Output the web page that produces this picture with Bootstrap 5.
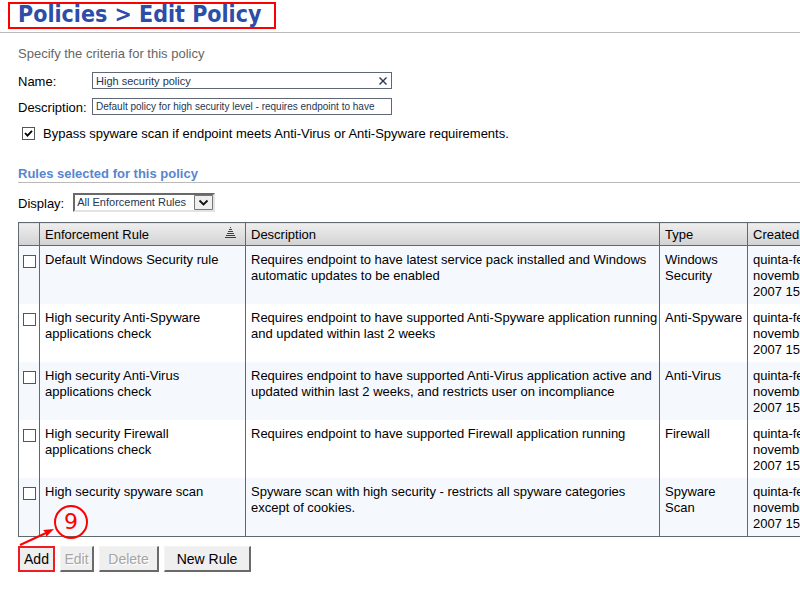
<!DOCTYPE html>
<html lang="en">
<head>
<meta charset="utf-8">
<meta name="viewport" content="width=device-width, initial-scale=1">
<title>Edit Policy</title>
<link href="https://cdn.jsdelivr.net/npm/bootstrap@5.3.0/dist/css/bootstrap.min.css" rel="stylesheet">
<style>
  body { font-family: "Liberation Sans", Arial, sans-serif; font-size: 13px; line-height: 16px; color: #000; background: #fff; overflow-x: hidden; }
  .title-bar { height: 33px; border-bottom: 1px solid #b9b9b9; padding-left: 8px; }
  .page-title { font-family: "DejaVu Sans Condensed", "Noto Sans", sans-serif; font-size: 23px; line-height: 20px; font-weight: 700; color: #2c4da8; border: 2px solid #f00; margin: 2px 0 0; padding: 0 13px 0 8px; height: 27px; }
  .page-body { padding-left: 18px; overflow: hidden; }
  .hint { color: #666; margin: 13px 0 10px; }
  .form-line { height: 18px; margin-bottom: 8px; }
  .form-line label { width: 74px; padding-top: 2px; }
  .field { width: 300px; height: 17px; border: 1px solid #606878; }
  .field input { flex: 1; min-width: 0; border: 0; outline: 0; padding: 1px 0 0 3px; font-size: 11px; line-height: 14px; color: #263650; background: none; }
  .field .long-value { font-size: 10px; }
  .clear-btn { border: 0; background: none; padding: 0; width: 16px; }
  .tick { appearance: none; flex: none; width: 13px; height: 13px; margin: 0; border: 1px solid #555; background: #fff; display: block; }
  .tick:checked { background: #fff url("data:image/svg+xml,%3Csvg xmlns='http://www.w3.org/2000/svg' viewBox='0 0 11 11'%3E%3Cpath d='M2 5 4.5 7.7 9 2.8' fill='none' stroke='%23000' stroke-width='1.8'/%3E%3C/svg%3E"); }
  .bypass { margin: 9px 0 0 4px; gap: 8px; }
  .bypass label { padding-top: 1px; }
  .section-title { font-size: 13px; line-height: 16px; font-weight: 700; color: #5686d0; margin: 24px 0 0; border-bottom: 1px solid #b9b9b9; }
  .display-line { margin: 10px 0; gap: 9px; height: 19px; }
  .display-line label { padding-top: 2px; }
  .picker { width: 142px; height: 19px; border: 2px solid; border-color: #696969 #e3e3e3 #e3e3e3 #696969; }
  .picker select { appearance: none; width: 100%; height: 15px; border: 0; border-radius: 0; outline: 0; background: #fff; color: #263650; font-size: 11px; line-height: 15px; padding: 0 20px 0 2px; }
  .picker svg { right: 0; top: 0; pointer-events: none; }
  .rules { table-layout: fixed; width: 870px; border-collapse: collapse; border: 1px solid #606870; }
  .rules th { font-weight: 400; height: 23px; padding: 1px 5px 0; border: 1px solid #606870; background: linear-gradient(#eee, #d2d2d2); }
  .rules td { height: 58px; padding: 6px 0 4px 5px; vertical-align: top; border: solid #606870; border-width: 0 1px; }
  .rules tbody tr:nth-child(odd) { background: #f5f9fe; }
  .rules td:first-child { padding: 9px 0 0 4px; }
  .c-tick { width: 21px; } .c-name { width: 206px; } .c-desc { width: 414px; } .c-type { width: 88px; }
  .actions { margin-top: 9px; gap: 5px; height: 26px; }
  .push { height: 26px; font-size: 14px; line-height: 16px; padding: 0; color: #000; background: #efefef; border: solid; border-width: 1px 2px 2px 1px; border-color: #f4f4f4 #6a6a6a #6a6a6a #f4f4f4; }
  .push:disabled { color: #a5a5a5; text-shadow: 1px 1px #fff; }
  .push-add { width: 37px; border: 2px solid #ee1c24; }
  .w-edit { width: 34px; } .w-delete { width: 60px; } .w-new { width: 87px; }
  .callout { left: 0; bottom: 23px; pointer-events: none; }
</style>
<script src="https://cdn.jsdelivr.net/npm/bootstrap@5.3.0/dist/js/bootstrap.bundle.min.js"></script>
</head>
<body>
<header class="title-bar d-flex align-items-start">
  <h1 class="page-title text-nowrap">Policies &gt; Edit Policy</h1>
</header>
<main class="page-body">
  <p class="hint">Specify the criteria for this policy</p>
  <form>
    <div class="form-line d-flex">
      <label for="name">Name:</label>
      <div class="field d-flex">
        <input id="name" type="text" value="High security policy">
        <button class="clear-btn d-flex align-items-center justify-content-center" type="button" aria-label="Clear"><svg width="8" height="8" viewBox="0 0 8 8"><path d="M.5.5l7 7M7.5.5l-7 7" stroke="#263650" stroke-width="1.4"/></svg></button>
      </div>
    </div>
    <div class="form-line d-flex">
      <label for="desc">Description:</label>
      <div class="field d-flex"><input class="long-value" id="desc" type="text" value="Default policy for high security level - requires endpoint to have"></div>
    </div>
    <div class="bypass d-flex align-items-center">
      <input class="tick" id="bypass" type="checkbox" checked>
      <label for="bypass">Bypass spyware scan if endpoint meets Anti-Virus or Anti-Spyware requirements.</label>
    </div>
    <h2 class="section-title">Rules selected for this policy</h2>
    <div class="display-line d-flex align-items-center">
      <label for="display">Display:</label>
      <div class="picker position-relative d-flex">
        <select id="display"><option>All Enforcement Rules</option></select>
        <svg class="position-absolute" width="19" height="15" viewBox="0 0 19 15"><path d="M.5.5h18v14H.5z" fill="#efefef" stroke="#777"/><path d="M5.5 5.5l4 4 4-4" fill="none" stroke="#111" stroke-width="1.8"/></svg>
      </div>
    </div>
    <table class="rules">
      <colgroup><col class="c-tick"><col class="c-name"><col class="c-desc"><col class="c-type"><col></colgroup>
      <thead>
        <tr>
          <th aria-label="Select"></th>
          <th><div class="d-flex justify-content-between align-items-start">Enforcement Rule
            <svg class="me-1" width="11" height="11" viewBox="0 0 11 11" stroke="#24465c"><path d="M5 .5h1M4 2.5h3M3 4.5h5M2 6.5h7M1 8.5h9M0 10.5h11"/></svg></div></th>
          <th>Description</th><th>Type</th><th>Created</th>
        </tr>
      </thead>
      <tbody>
        <tr><td><input class="tick" type="checkbox" aria-label="Default Windows Security rule"></td><td>Default Windows Security rule</td><td>Requires endpoint to have latest service pack installed and Windows automatic updates to be enabled</td><td>Windows Security</td><td>quinta-feira<br>novembro<br>2007 15:00</td></tr>
        <tr><td><input class="tick" type="checkbox" aria-label="High security Anti-Spyware applications check"></td><td>High security Anti-Spyware<br>applications check</td><td>Requires endpoint to have supported Anti-Spyware application running and updated within last 2 weeks</td><td>Anti-Spyware</td><td>quinta-feira<br>novembro<br>2007 15:00</td></tr>
        <tr><td><input class="tick" type="checkbox" aria-label="High security Anti-Virus applications check"></td><td>High security Anti-Virus<br>applications check</td><td>Requires endpoint to have supported Anti-Virus application active and updated within last 2 weeks, and restricts user on incompliance</td><td>Anti-Virus</td><td>quinta-feira<br>novembro<br>2007 15:00</td></tr>
        <tr><td><input class="tick" type="checkbox" aria-label="High security Firewall applications check"></td><td>High security Firewall<br>applications check</td><td>Requires endpoint to have supported Firewall application running</td><td>Firewall</td><td>quinta-feira<br>novembro<br>2007 15:00</td></tr>
        <tr><td><input class="tick" type="checkbox" aria-label="High security spyware scan"></td><td>High security spyware scan</td><td>Spyware scan with high security - restricts all spyware categories<br>except of cookies.</td><td>Spyware<br>Scan</td><td>quinta-feira<br>novembro<br>2007 15:00</td></tr>
      </tbody>
    </table>
    <div class="actions d-flex position-relative">
      <button class="push push-add" type="button">Add</button>
      <button class="push w-edit" type="button" disabled>Edit</button>
      <button class="push w-delete" type="button" disabled>Delete</button>
      <button class="push w-new" type="button">New Rule</button>
      <svg class="callout position-absolute" width="72" height="46" viewBox="0 0 72 46" fill="none" stroke="#f00"><circle cx="53" cy="19" r="16" stroke-width="2"/><path d="M2 42L28 30" stroke-width="2"/><path d="M36 26l-11 1 3 3v4z" fill="#f00" stroke="none"/><text x="53" y="26" text-anchor="middle" font-family="DejaVu Sans, sans-serif" font-size="22" fill="#f00" stroke="none">9</text></svg>
    </div>
  </form>
</main>
</body>
</html>
